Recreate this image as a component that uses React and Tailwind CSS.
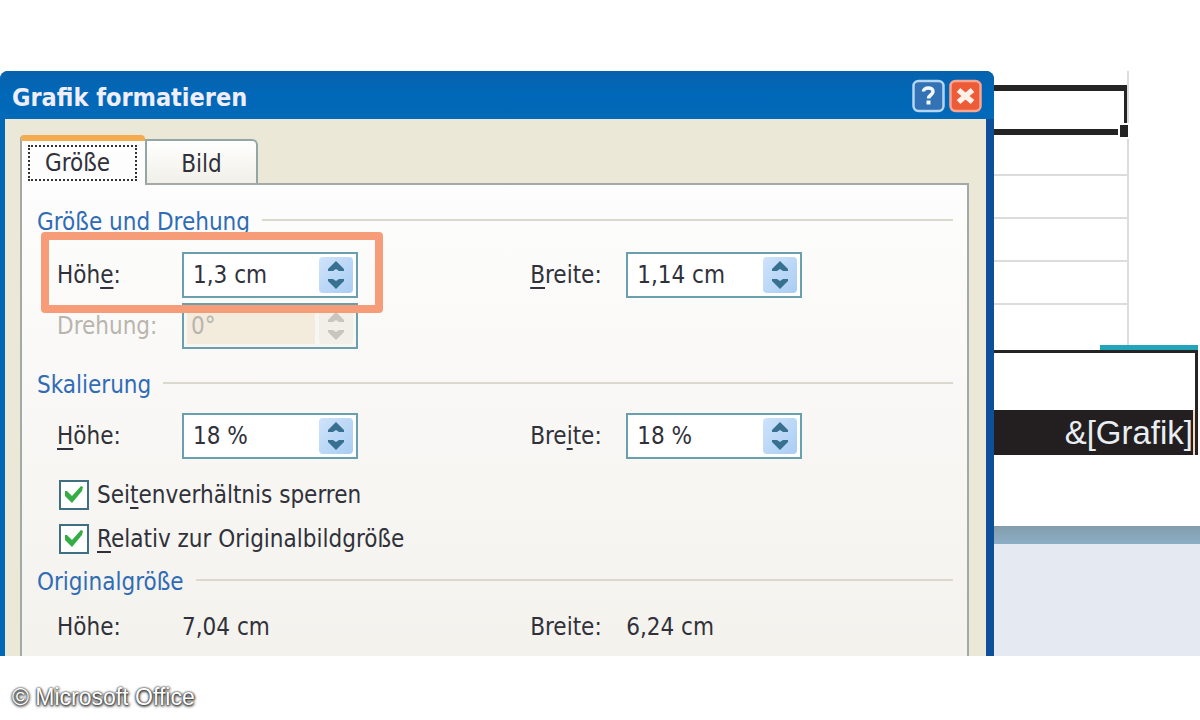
import React from "react";

function Chevrons({ disabled }) {
  const color = disabled ? "text-[#c9c5bd]" : "text-[#38708f]";
  return (
    <div
      className={`flex w-[34px] shrink-0 flex-col items-center justify-center gap-2 rounded-sm ${
        disabled ? "bg-[#f2efe8]" : "bg-gradient-to-br from-[#cfe3fb] to-[#a9cdf3]"
      } ${color}`}
    >
      <button type="button" disabled={disabled} aria-label="Erhöhen">
        <svg className="block" width="18" height="10" viewBox="0 0 18 10">
          <path d="M9 0 L17 8 L17 10 L12 10 L9 8 L6 10 L1 10 L1 8 Z" fill="currentColor" />
        </svg>
      </button>
      <button type="button" disabled={disabled} aria-label="Verringern">
        <svg className="block" width="18" height="10" viewBox="0 0 18 10">
          <path d="M9 10 L17 2 L17 0 L12 0 L9 2 L6 0 L1 0 L1 2 Z" fill="currentColor" />
        </svg>
      </button>
    </div>
  );
}

function Spinner({ id, value, disabled }) {
  return (
    <div
      className={`flex h-[46px] w-44 border-2 border-[#6a9fad] p-[3px] ${
        disabled ? "bg-[#f8f6f2]" : "bg-white"
      }`}
    >
      <input
        id={id}
        type="text"
        defaultValue={value}
        disabled={disabled}
        className={`w-0 min-w-0 flex-1 outline-none ${
          disabled ? "mr-1 bg-[#f3ebdc] pl-1 text-[#b9b5ae]" : "pl-1.5"
        }`}
      />
      <Chevrons disabled={disabled} />
    </div>
  );
}

function SectionTitle({ children }) {
  return (
    <div className="flex h-7 items-center gap-3 pr-3.5">
      <h2 className="text-[#2f6cb5]">{children}</h2>
      <div className="mb-1 h-0.5 flex-1 bg-[#dbd8cd]" />
    </div>
  );
}

function Field({ id, label, narrow, disabled, children }) {
  return (
    <div className="relative flex h-[46px] items-center">
      <label
        htmlFor={id}
        className={`shrink-0 ${narrow ? "w-24" : "w-[125px]"} ${disabled ? "text-[#b9b5ae]" : ""}`}
      >
        {label}
      </label>
      {children}
    </div>
  );
}

function Key({ children }) {
  return <span className="underline decoration-2 underline-offset-4">{children}</span>;
}

function Check({ id, children }) {
  return (
    <div className="flex h-[30px] items-center gap-2">
      <div className="relative h-[30px] w-[30px]">
        <input
          id={id}
          type="checkbox"
          defaultChecked
          className="peer block h-[30px] w-[30px] appearance-none border-2 border-[#3f6f83] bg-white"
        />
        <svg
          className="pointer-events-none absolute inset-0 hidden peer-checked:block"
          width="30"
          height="30"
          viewBox="0 0 30 30"
        >
          <path d="M6 11 L8 11 L13 16 L22 6 L24 7 L23 11 L13 23 L6 16 Z" fill="#35ad46" />
        </svg>
      </div>
      <label htmlFor={id}>{children}</label>
    </div>
  );
}

function Dialog() {
  return (
    <section className="relative z-10 flex min-w-0 flex-1 flex-col rounded-t-lg bg-gradient-to-r from-[#0068b5] to-[#0d4f98]">
      <header className="flex h-12 items-center justify-between rounded-t-lg bg-gradient-to-b from-[#0862ad] via-[#0068b8] to-[#0369b8] px-3">
        <h1 className="pt-1.5 font-['DejaVu_Sans_Condensed','DejaVu_Sans',sans-serif] text-[25px] font-bold text-[#f1eefb]">
          Grafik formatieren
        </h1>
        <div className="flex gap-1 pt-0.5">
          <button type="button" aria-label="Hilfe">
            <svg className="block" width="33" height="34" viewBox="0 0 33 34">
              <rect x="1.5" y="2" width="30" height="30" rx="5" fill="#3272b5" stroke="#b5d5f4" strokeWidth="2.5" />
              <path
                d="M11.5 12.5 C11.5 8 21 7.5 21 12.5 C21 16 16.5 16 16.5 19.5"
                fill="none"
                stroke="#f4f8ff"
                strokeWidth="3.5"
              />
              <rect x="14.5" y="21.5" width="4" height="4" fill="#f4f8ff" />
            </svg>
          </button>
          <button type="button" aria-label="Schließen">
            <svg className="block" width="33" height="34" viewBox="0 0 33 34">
              <rect x="1.5" y="2" width="30" height="30" rx="5" fill="#ee5b39" stroke="#f8a68f" strokeWidth="2.5" />
              <path d="M9.5 11 L23.5 23 M23.5 11 L9.5 23" stroke="#fff1e8" strokeWidth="5.5" />
            </svg>
          </button>
        </div>
      </header>

      <div className="mr-2 ml-[5px] flex flex-1 flex-col bg-[#ece8d8] pt-4 pr-[17px] pl-[15px]">
        <div role="tablist" className="flex items-end">
          <button
            type="button"
            role="tab"
            aria-selected="true"
            className="relative z-10 -mb-0.5 flex h-[50px] w-[125px] rounded-t border-t-[6px] border-l-2 border-t-[#f5ac4e] border-l-[#a3aaa6] bg-[#fdfdfd] pt-1 pr-2 pl-1.5"
          >
            <span className="flex h-9 w-full items-center justify-center border-2 border-dotted border-[#333] pr-2.5">
              Größe
            </span>
          </button>
          <button
            type="button"
            role="tab"
            aria-selected="false"
            className="h-11 w-[113px] rounded-tr-md border-2 border-b-0 border-[#94a5a5] bg-gradient-to-b from-white to-[#f1efe8] pt-1"
          >
            Bild
          </button>
        </div>

        <div className="flex-1 border-2 border-b-0 border-[#a3aaa6] bg-gradient-to-b from-[#fdfdfd] to-[#f4f2ed] pt-[23px] pb-1.5 pl-[15px]">
          <SectionTitle>Größe und Drehung</SectionTitle>
          <div className="mt-4 grid grid-cols-[52%_48%] gap-y-[5px] pl-5">
            <Field id="height" label={<>Höh<Key>e</Key>:</>}>
              <Spinner id="height" value="1,3 cm" />
              <div className="pointer-events-none absolute -top-5 -left-4 z-10 h-[81px] w-[342px] rounded-sm border-8 border-[#f79c78]" />
            </Field>
            <Field id="width" narrow label={<><Key>B</Key>reite:</>}>
              <Spinner id="width" value="1,14 cm" />
            </Field>
            <Field id="rotation" disabled label="Drehung:">
              <Spinner id="rotation" value="0°" disabled />
            </Field>
          </div>

          <div className="mt-[22px]">
            <SectionTitle>Skalierung</SectionTitle>
          </div>
          <div className="mt-3.5 grid grid-cols-[52%_48%] pl-5">
            <Field id="scale-height" label={<><Key>H</Key>öhe:</>}>
              <Spinner id="scale-height" value="18 %" />
            </Field>
            <Field id="scale-width" narrow label={<>Bre<Key>i</Key>te:</>}>
              <Spinner id="scale-width" value="18 %" />
            </Field>
          </div>
          <div className="mt-[21px] flex flex-col gap-3.5 pl-[22px]">
            <Check id="lock">
              Sei<Key>t</Key>enverhältnis sperren
            </Check>
            <Check id="relative">
              <Key>R</Key>elativ zur Originalbildgröße
            </Check>
          </div>

          <div className="mt-3.5">
            <SectionTitle>Originalgröße</SectionTitle>
          </div>
          <div className="mt-2 grid grid-cols-[52%_48%] pl-5">
            <Field id="orig-height" label="Höhe:">
              <output id="orig-height">7,04 cm</output>
            </Field>
            <Field id="orig-width" narrow label="Breite:">
              <output id="orig-width">6,24 cm</output>
            </Field>
          </div>
        </div>
      </div>
    </section>
  );
}

function Sheet() {
  return (
    <aside className="flex w-[206px] shrink-0 flex-col">
      <div className="mr-[71px] border-r-2 border-[#dcdcdc] pt-3.5">
        <div className="relative h-[50px] border-y-[6px] border-r-[3px] border-[#242424]">
          <div className="absolute -right-1.5 -bottom-2.5 h-4 w-3 border-2 border-white bg-[#242424]" />
        </div>
        <div className="h-[41px] border-b-2 border-[#dcdcdc]" />
        <div className="h-[43px] border-b-2 border-[#dcdcdc]" />
        <div className="h-[43px] border-b-2 border-[#dcdcdc]" />
        <div className="h-[43px] border-b-2 border-[#dcdcdc]" />
        <div className="h-10" />
      </div>
      <div className="mr-0.5 ml-[106px] h-[5px] bg-[#22a5bb]" />
      <div className="mr-0.5 border-t-[3px] border-r-[3px] border-[#242424] pt-[57px]">
        <div className="flex h-[45px] items-center justify-end border-r-2 border-[#f3d9c6] bg-[#231f20] font-['Liberation_Sans',Arial,sans-serif] text-[33px] text-[#e9eef2]">
          &amp;[Grafik]
        </div>
      </div>
      <div className="h-[71px]" />
      <div className="h-[18px] bg-gradient-to-b from-[#839dac] to-[#8caec6]" />
      <div className="flex-1 bg-[#e4e9f2]" />
    </aside>
  );
}

export default function App() {
  return (
    <main className="min-h-screen bg-white pt-[71px] font-['DejaVu_Sans_Condensed','DejaVu_Sans',sans-serif] text-2xl text-[#30313a]">
      <div className="flex">
        <Dialog />
        <Sheet />
      </div>
      <footer className="px-3 pt-[26px] font-['Liberation_Sans',Arial,sans-serif] text-[23px] text-white [text-shadow:0_0_2px_#222,0_1px_3px_#222,1px_1px_3px_#555]">
        © Microsoft Office
      </footer>
    </main>
  );
}
